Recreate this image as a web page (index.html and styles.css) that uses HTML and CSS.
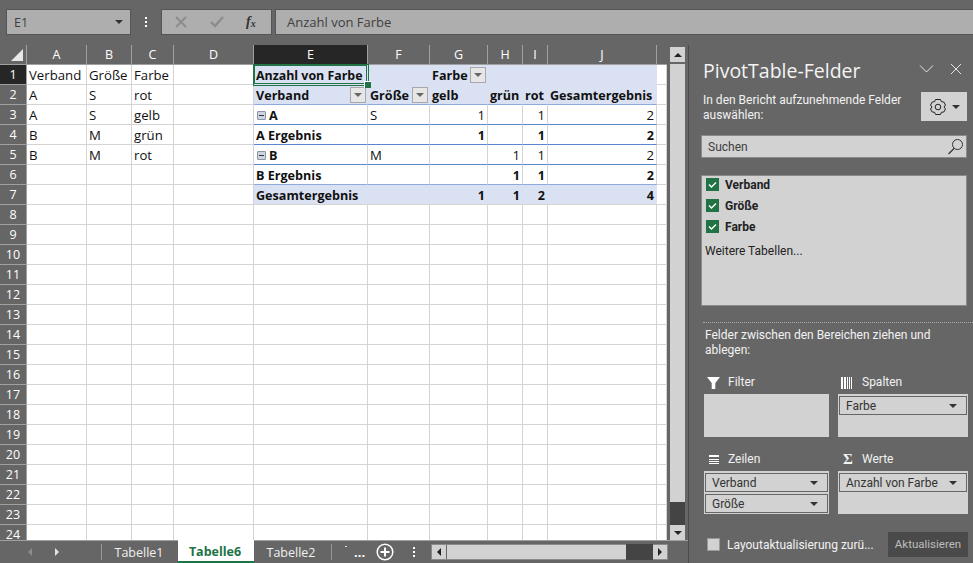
FILE: index.html
```html
<!DOCTYPE html>
<html lang="de">
<head>
<meta charset="utf-8">
<title>PivotTable</title>
<link rel="stylesheet" href="styles.css">
</head>
<body>
<div class="app">
  <div class="formula">
    <div class="namebox"><span>E1</span><i class="caret"></i></div>
    <div class="vdots"><b></b><b></b><b></b></div>
    <div class="fx">
      <svg width="14" height="14" viewBox="0 0 14 14" class="fx-x"><path d="M2 2l10 10M12 2L2 12" stroke="#8c8c8c" stroke-width="1.8" fill="none"/></svg>
      <svg width="16" height="14" viewBox="0 0 16 14" class="fx-c"><path d="M2 7l4 4 8-9" stroke="#8c8c8c" stroke-width="2.4" fill="none"/></svg>
      <span class="fx-f">f<sub>x</sub></span>
    </div>
    <div class="fbar">Anzahl von Farbe</div>
  </div>
  <div class="work">
  <div class="main">
    <div class="sheetrow">
      <div class="sheet">
        <table class="grid">
          <colgroup><col class="c0"><col class="ca"><col class="cb"><col class="cc"><col class="cd"><col class="ce"><col class="cf"><col class="cg"><col class="ch"><col class="ci"><col class="cj"><col class="ck"></colgroup>
          <tr class="hdr"><th class="corner"><i></i></th><th>A</th><th>B</th><th>C</th><th>D</th><th class="sel">E</th><th>F</th><th>G</th><th>H</th><th>I</th><th>J</th><th class="last"></th></tr>
          <tr><th class="sel">1</th><td>Verband</td><td>Größe</td><td>Farbe</td><td></td><td class="pv b active">Anzahl von Farbe<i class="handle"></i></td><td class="pv"></td><td class="pv b">Farbe<i class="fbtn a"></i></td><td class="pv"></td><td class="pv"></td><td class="pv"></td><td></td></tr>
          <tr><th>2</th><td>A</td><td>S</td><td>rot</td><td></td><td class="pv b ul">Verband<i class="fbtn"></i></td><td class="pv b ul">Größe<i class="fbtn"></i></td><td class="pv b ul">gelb</td><td class="pv b ul">grün</td><td class="pv b ul">rot</td><td class="pv b ul">Gesamtergebnis</td><td></td></tr>
          <tr><th>3</th><td>A</td><td>S</td><td>gelb</td><td></td><td class="b ul2"><i class="minus"></i>A</td><td class="ul2">S</td><td class="r ul2">1</td><td class="ul2"></td><td class="r ul2">1</td><td class="r ul2">2</td><td></td></tr>
          <tr><th>4</th><td>B</td><td>M</td><td>grün</td><td></td><td class="b ul2">A Ergebnis</td><td class="ul2"></td><td class="r b ul2">1</td><td class="ul2"></td><td class="r b ul2">1</td><td class="r b ul2">2</td><td></td></tr>
          <tr><th>5</th><td>B</td><td>M</td><td>rot</td><td></td><td class="b ul2"><i class="minus"></i>B</td><td class="ul2">M</td><td class="ul2"></td><td class="r ul2">1</td><td class="r ul2">1</td><td class="r ul2">2</td><td></td></tr>
          <tr><th>6</th><td></td><td></td><td></td><td></td><td class="b ul">B Ergebnis</td><td class="ul"></td><td class="ul"></td><td class="r b ul">1</td><td class="r b ul">1</td><td class="r b ul">2</td><td></td></tr>
          <tr><th>7</th><td></td><td></td><td></td><td></td><td class="pv b nl">Gesamtergebnis</td><td class="pv nl"></td><td class="pv r b nl">1</td><td class="pv r b nl">1</td><td class="pv r b nl">2</td><td class="pv r b nl">4</td><td></td></tr>
          <tr><th>8</th><td></td><td></td><td></td><td></td><td></td><td></td><td></td><td></td><td></td><td></td><td></td></tr>
          <tr><th>9</th><td></td><td></td><td></td><td></td><td></td><td></td><td></td><td></td><td></td><td></td><td></td></tr>
          <tr><th>10</th><td></td><td></td><td></td><td></td><td></td><td></td><td></td><td></td><td></td><td></td><td></td></tr>
          <tr><th>11</th><td></td><td></td><td></td><td></td><td></td><td></td><td></td><td></td><td></td><td></td><td></td></tr>
          <tr><th>12</th><td></td><td></td><td></td><td></td><td></td><td></td><td></td><td></td><td></td><td></td><td></td></tr>
          <tr><th>13</th><td></td><td></td><td></td><td></td><td></td><td></td><td></td><td></td><td></td><td></td><td></td></tr>
          <tr><th>14</th><td></td><td></td><td></td><td></td><td></td><td></td><td></td><td></td><td></td><td></td><td></td></tr>
          <tr><th>15</th><td></td><td></td><td></td><td></td><td></td><td></td><td></td><td></td><td></td><td></td><td></td></tr>
          <tr><th>16</th><td></td><td></td><td></td><td></td><td></td><td></td><td></td><td></td><td></td><td></td><td></td></tr>
          <tr><th>17</th><td></td><td></td><td></td><td></td><td></td><td></td><td></td><td></td><td></td><td></td><td></td></tr>
          <tr><th>18</th><td></td><td></td><td></td><td></td><td></td><td></td><td></td><td></td><td></td><td></td><td></td></tr>
          <tr><th>19</th><td></td><td></td><td></td><td></td><td></td><td></td><td></td><td></td><td></td><td></td><td></td></tr>
          <tr><th>20</th><td></td><td></td><td></td><td></td><td></td><td></td><td></td><td></td><td></td><td></td><td></td></tr>
          <tr><th>21</th><td></td><td></td><td></td><td></td><td></td><td></td><td></td><td></td><td></td><td></td><td></td></tr>
          <tr><th>22</th><td></td><td></td><td></td><td></td><td></td><td></td><td></td><td></td><td></td><td></td><td></td></tr>
          <tr><th>23</th><td></td><td></td><td></td><td></td><td></td><td></td><td></td><td></td><td></td><td></td><td></td></tr>
          <tr><th>24</th><td></td><td></td><td></td><td></td><td></td><td></td><td></td><td></td><td></td><td></td><td></td></tr>
        </table>
      </div>
      <div class="vscroll">
        <div class="sbtn"><i class="tri up"></i></div>
        <div class="vtrack"></div>
        <div class="vthumb"></div>
        <div class="sbtn"><i class="tri down"></i></div>
      </div>
    </div>
    <div class="tabs">
      <div class="tabnav"><i class="tri left dim"></i><i class="tri right lite"></i></div>
      <div class="tab">Tabelle1</div>
      <div class="tab active">Tabelle6</div>
      <div class="tab">Tabelle2</div>
      <div class="more">...</div>
      <svg class="plus" width="20" height="20" viewBox="0 0 20 20"><circle cx="10" cy="10" r="7.8" fill="none" stroke="#fff" stroke-width="1.5"/><path d="M10 5.500v9M5.500 10h9" stroke="#fff" stroke-width="2"/></svg>
      <div class="vdots tabdots"><b></b><b></b><b></b></div>
      <div class="hscroll">
        <div class="hbtn"><i class="tri left"></i></div>
        <div class="htrack"></div>
        <div class="hthumb"></div>
        <div class="hbtn"><i class="tri right"></i></div>
      </div>
    </div>
  </div>
  <aside class="pane">
    <div class="pane-head">
      <h1>PivotTable-Felder</h1>
      <svg class="chev" width="15" height="10" viewBox="0 0 15 10"><path d="M1 1.500l6.500 6.500L14 1.500" stroke="#e6e6e6" stroke-width="1" fill="none"/></svg>
      <svg class="close" width="12" height="12" viewBox="0 0 12 12"><path d="M1 1l10 10M11 1L1 11" stroke="#e6e6e6" stroke-width="1" fill="none"/></svg>
    </div>
    <div class="pane-sub">
      <p>In den Bericht aufzunehmende Felder auswählen:</p>
      <div class="gear">
        <svg width="18" height="18" viewBox="0 0 18 18"><path d="M6.500 1.500h5l.9 2.200 2.400.3 1.700 3-1.500 2 1.500 2-1.700 3-2.400.3-.9 2.200h-5l-.9-2.200-2.400-.3-1.700-3 1.500-2-1.500-2 1.700-3 2.400-.3z" fill="none" stroke="#222" stroke-width="1"/><circle cx="9" cy="9" r="2.800" fill="none" stroke="#222" stroke-width="1"/></svg>
        <i class="caret"></i>
      </div>
    </div>
    <div class="search"><span>Suchen</span>
      <svg width="17" height="17" viewBox="0 0 17 17"><circle cx="10.500" cy="6.500" r="5" fill="none" stroke="#333" stroke-width="1"/><path d="M7 10.500L1.500 16" stroke="#333" stroke-width="1.200"/></svg>
    </div>
    <div class="fields">
      <div class="field"><svg class="check" width="13" height="13" viewBox="0 0 13 13"><rect width="13" height="13" fill="#217346"/><path d="M3 6.500l2.500 2.500L10 4.500" stroke="#fff" stroke-width="1.400" fill="none"/></svg>Verband</div>
      <div class="field"><svg class="check" width="13" height="13" viewBox="0 0 13 13"><rect width="13" height="13" fill="#217346"/><path d="M3 6.500l2.500 2.500L10 4.500" stroke="#fff" stroke-width="1.400" fill="none"/></svg>Größe</div>
      <div class="field"><svg class="check" width="13" height="13" viewBox="0 0 13 13"><rect width="13" height="13" fill="#217346"/><path d="M3 6.500l2.500 2.500L10 4.500" stroke="#fff" stroke-width="1.400" fill="none"/></svg>Farbe</div>
      <div class="moretables">Weitere Tabellen...</div>
    </div>
    <div class="divider"></div>
    <p class="dragnote">Felder zwischen den Bereichen ziehen und ablegen:</p>
    <div class="areas">
      <section class="area">
        <h2><svg width="14" height="12" viewBox="0 0 14 12"><path d="M0 0h13L8.300 6v6H4.700V6z" fill="#fff"/></svg>Filter</h2>
        <div class="drop"></div>
      </section>
      <section class="area">
        <h2><svg width="14" height="12" viewBox="0 0 14 12"><path d="M1 0v12M4 0v12" stroke="#fff" stroke-width="2"/><path d="M6.500 0v12M8.500 0v12M10.500 0v12" stroke="#fff" stroke-width="1"/></svg>Spalten</h2>
        <div class="drop"><div class="chip">Farbe<i class="caret"></i></div></div>
      </section>
      <section class="area">
        <h2><svg width="14" height="12" viewBox="0 0 14 12"><path d="M2 2h10" stroke="#fff" stroke-width="2"/><path d="M2 5.500h10M2 7.500h10M2 9.500h10" stroke="#fff" stroke-width="1"/></svg>Zeilen</h2>
        <div class="drop"><div class="chip">Verband<i class="caret"></i></div><div class="chip">Größe<i class="caret"></i></div></div>
      </section>
      <section class="area">
        <h2><span class="sigma">Σ</span>Werte</h2>
        <div class="drop"><div class="chip">Anzahl von Farbe<i class="caret"></i></div></div>
      </section>
    </div>
    <div class="pane-foot">
      <i class="box"></i><span class="defer">Layoutaktualisierung zurü...</span>
      <div class="update">Aktualisieren</div>
    </div>
  </aside>
  </div>
</div>
</body>
</html>
```
FILE: styles.css
```css
* { box-sizing: border-box; }
html, body { margin: 0; padding: 0; height: 100%; overflow: hidden; }
body { background: #666; font-family: "Open Sans", "Liberation Sans", sans-serif; font-size: 13px; color: #000; }
.app { display: flex; flex-direction: column; width: 973px; height: 563px; }
.work { display: flex; height: 518px; }
.main { width: 689px; flex: none; display: flex; flex-direction: column; border-right: 1px solid #4a4a4a; }

.formula { height: 45px; display: flex; align-items: flex-start; padding: 9px 0 0 6px; }
.namebox { width: 125px; flex: none; height: 26px; background: #aeaeae; border: 1px solid #555; display: flex; align-items: center; justify-content: space-between; padding: 0 7px; color: #404040; font-size: 12.500px; }
.caret { display: inline-block; width: 0; height: 0; border: 4px solid transparent; border-top: 4px solid #333; border-bottom: 0; }
.vdots { width: 30px; flex: none; height: 26px; display: flex; flex-direction: column; align-items: center; justify-content: center; gap: 2px; }
.vdots b { width: 2px; height: 2px; background: #fff; }
.fx { width: 111px; flex: none; height: 26px; background: #aeaeae; border: 1px solid #555; display: flex; align-items: center; padding-left: 12px; }
.fx-c { margin-left: 21px; }
.fx-f { margin-left: 21px; font-family: "Liberation Serif", serif; font-style: italic; font-weight: bold; font-size: 14px; color: #333; line-height: 1; }
.fx-f sub { font-size: 10px; vertical-align: -1px; }
.fbar { flex: 1; height: 26px; margin-left: 3px; background: #aeaeae; border: 1px solid #555; border-right: 0; color: #404040; line-height: 24px; padding-left: 11px; }

.sheetrow { height: 495px; display: flex; }
.sheet { width: 667px; height: 495px; overflow: hidden; background: #666; }
.grid { border-collapse: separate; border-spacing: 0; table-layout: fixed; width: 667px; }
.c0 { width: 27px; } .ca { width: 60px; } .cb { width: 45px; } .cc { width: 42px; } .cd { width: 80px; }
.ce { width: 114px; } .cf { width: 62px; } .cg { width: 58px; } .ch { width: 35px; } .ci { width: 25px; } .cj { width: 109px; } .ck { width: 10px; }
.grid tr { height: 20px; }
.grid th { background: #666; color: #fff; font-weight: 400; font-size: 12.500px; padding: 0; text-align: center; border-right: 1px solid #a0a0a0; border-bottom: 1px solid #a0a0a0; height: 20px; line-height: 19px; overflow: hidden; }
.grid tr:not(.hdr) th { padding-top: 1px; line-height: 18px; }
.grid th.sel { background: #262626; }
.grid th.last { border-right: 0; }
.corner { position: relative; }
.corner i { position: absolute; right: 3px; bottom: 3px; width: 0; height: 0; border-style: solid; border-width: 0 0 12px 12px; border-color: transparent transparent #e8e8e8 transparent; }
.grid td { background: #fff; height: 20px; padding: 1px 2px 0; border-right: 1px solid #d4d4d4; border-bottom: 1px solid #d4d4d4; font-size: 13.200px; line-height: 18px; white-space: nowrap; overflow: visible; position: relative; color: #111; }
.grid td.pv { background: #d9e1f2; border-right-color: #d9e1f2; border-bottom-color: #d9e1f2; }
.grid td.b { font-weight: 700; font-size: 12.600px; padding-top: 2px; line-height: 17px; }
.grid td.r { text-align: right; padding-right: 2px; }
.grid td.ul { border-bottom-color: #8ea9db; }
.grid td.ul2 { border-bottom-color: #5b86cf; }
.grid td.nl { border-bottom-color: #d4d4d4; }
.grid td.active { box-shadow: 0 0 0 1px #217346, inset 0 0 0 1px #217346; z-index: 1; font-size: 12.400px; }
.handle { position: absolute; right: -4px; bottom: -4px; width: 6px; height: 6px; background: #217346; border: 1px solid #fff; border-width: 1px 0 0 1px; box-sizing: content-box; z-index: 2; }
.fbtn { position: absolute; right: 1px; top: 2px; width: 16px; height: 16px; background: #e6e6e6; border: 1px solid #a8a8a8; }
.fbtn.a { right: auto; left: 40px; top: 2px; }
.fbtn::after { content: ""; position: absolute; left: 3px; top: 5px; border: 4px solid transparent; border-top: 4px solid #666; border-bottom: 0; }
.minus { display: inline-block; width: 9px; height: 9px; margin: 0 3px 0 1px; background: #cdd3e0; border: 1px solid #8d94a3; position: relative; border-radius: 1px; }
.minus::after { content: ""; position: absolute; left: 1px; top: 3px; width: 5px; height: 1px; background: #333; }

.vscroll { width: 21px; display: flex; flex-direction: column; padding: 2px 3px 0 3px; height: 495px; }
.sbtn { height: 15px; background: #d2d2d2; display: flex; align-items: center; justify-content: center; flex: none; }
.vtrack { height: 439px; margin-top: 2px; background: #d2d2d2; }
.vthumb { height: 23px; background: #444; }
.tri { display: inline-block; width: 0; height: 0; border: 4px solid transparent; }
.tri.up { border-top: 0; border-bottom-color: #222; }
.tri.down { border-bottom: 0; border-top-color: #222; }
.tri.left { border-left: 0; border-right-color: #222; }
.tri.right { border-right: 0; border-left-color: #222; }
.tri.dim { border-right-color: #8c8c8c; }
.tri.lite { border-left-color: #e4e4e4; }

.tabs { height: 23px; display: flex; align-items: stretch; border-top: 1px solid #a0a0a0; }
.tabnav { width: 102px; margin: 3px 0; border-right: 1px solid #999; display: flex; align-items: center; gap: 23px; padding-left: 28px; }
.tab { color: #f0f0f0; text-align: center; line-height: 23px; font-size: 12.500px; width: 76px; padding-right: 2px; }
.tab.active { background: #fff; color: #217346; font-weight: 700; border-bottom: 2px solid #217346; margin-top: -1px; }
.more { width: 34px; margin-left: 1px; border-left: 1px solid #999; margin-top: 3px; margin-bottom: 3px; color: #fff; font-weight: 700; line-height: 16px; padding-left: 22px; position: relative; }
.more::before { content: ""; position: absolute; left: 13px; top: 2px; width: 2px; height: 1px; background: #e0e0e0; }
.plus { margin: 1px 0 0 10px; flex: none; }
.tabdots { width: 20px; height: 22px; margin-left: 9px; }
.hscroll { display: flex; align-items: center; margin-left: 7px; height: 16px; margin-top: 3px; border: 1px solid #8a8a8a; width: 237px; }
.hbtn { width: 14px; height: 14px; background: #d2d2d2; display: flex; align-items: center; justify-content: center; flex: none; }
.htrack { width: 179px; height: 14px; background: #d2d2d2; margin-left: 1px; }
.hthumb { width: 27px; height: 16px; background: #444; }

.pane { width: 284px; padding: 0 6px 0 15px; color: #fff; font-family: Roboto, "Liberation Sans", sans-serif; }
.pane-head { height: 47px; display: flex; align-items: flex-start; padding-top: 13px; margin-left: -1px; }
.pane-head h1 { margin: 0; font-family: "Open Sans", sans-serif; font-weight: 400; font-size: 19.500px; line-height: 26px; color: #f4f4f4; width: 216px; flex: none; }
.chev { margin-top: 6px; flex: none; }
.close { margin: 5px 0 0 16px; flex: none; }
.pane-sub { display: flex; justify-content: space-between; height: 43px; }
.pane-sub p { margin: 1px 0 0 -1px; width: 206px; font-size: 12px; line-height: 15px; color: #f2f2f2; }
.gear { width: 46px; height: 29px; background: #d2d2d2; display: flex; align-items: center; gap: 5px; padding-left: 8px; }
.search { height: 23px; margin-left: -3px; background: #d2d2d2; border: 1px solid #8a8a8a; display: flex; align-items: center; justify-content: space-between; padding: 0 0 0 6px; color: #404040; font-size: 12px; }
.search svg { margin-right: 2px; }
.fields { height: 131px; margin: 17px 0 0 -3px; background: #d2d2d2; border: 1px solid #8a8a8a; padding: 0 0 0 4px; color: #222; font-size: 12px; }
.field { height: 21px; display: flex; align-items: center; font-weight: 700; }
.field:first-child { margin-top: -2px; }
.check { margin-right: 6px; }
.moretables { margin: 6px 0 0 -1px; line-height: 17px; }
.divider { height: 1px; margin: 16px -6px 0 -1px; border-top: 1px dotted #a8a8a8; }
.dragnote { margin: 5px 0 0 1px; width: 240px; font-size: 12px; line-height: 15px; color: #f2f2f2; height: 29px; }
.areas { display: grid; grid-template-columns: 125px 130px; column-gap: 9px; row-gap: 13px; padding-top: 16px; }
.area h2 { margin: 0; height: 19px; font-weight: 400; font-size: 12px; line-height: 19px; display: flex; align-items: center; color: #f2f2f2; }
.area h2 svg, .sigma { width: 14px; margin: 0 7px 0 3px; flex: none; }
.sigma { font-family: "Liberation Serif", serif; font-weight: 700; font-size: 15px; text-align: center; }
.drop { height: 43px; background: #d2d2d2; margin-top: 2px; padding: 2px 1px; }
.chip { height: 19px; border: 1px solid #666; background: #d2d2d2; color: #333; font-size: 12px; display: flex; align-items: center; justify-content: space-between; padding: 0 9px 0 6px; margin-bottom: 2px; }
.pane-foot { display: flex; align-items: center; margin-top: 18px; height: 25px; margin-left: 3px; }
.box { width: 13px; height: 13px; background: #d2d2d2; border: 1px solid #999; flex: none; }
.defer { margin-left: 7px; font-size: 12px; color: #f2f2f2; white-space: nowrap; width: 154px; flex: none; }
.update { width: 80px; height: 25px; background: #4a4a4a; color: #bdbdbd; font-size: 11.500px; line-height: 25px; text-align: center; flex: none; margin-left: 7px; }
```
